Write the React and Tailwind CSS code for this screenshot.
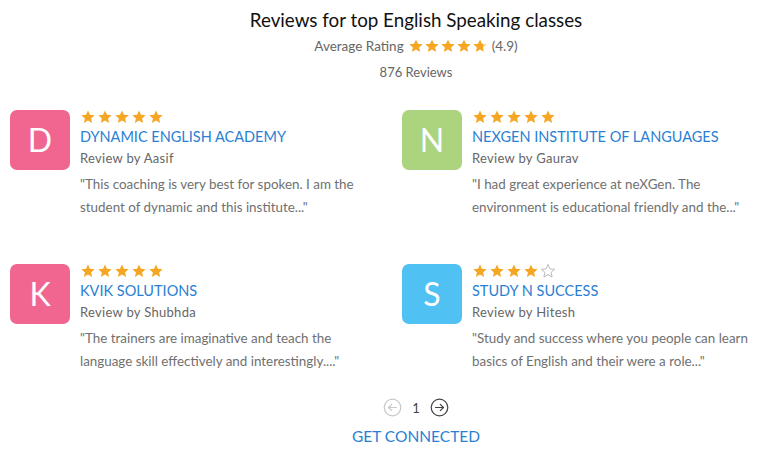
import React from 'react';

const reviews = [
  {
    letter: 'D',
    color: 'bg-[#f06690]',
    name: 'DYNAMIC ENGLISH ACADEMY',
    by: 'Aasif',
    rating: 5,
    text: '"This coaching is very best for spoken. I am the student of dynamic and this institute..."',
  },
  {
    letter: 'N',
    color: 'bg-[#acd37e]',
    name: 'NEXGEN INSTITUTE OF LANGUAGES',
    by: 'Gaurav',
    rating: 5,
    text: '"I had great experience at neXGen. The environment is educational friendly and the..."',
  },
  {
    letter: 'K',
    color: 'bg-[#f06690]',
    name: 'KVIK SOLUTIONS',
    by: 'Shubhda',
    rating: 5,
    text: '"The trainers are imaginative and teach the language skill effectively and interestingly...."',
  },
  {
    letter: 'S',
    color: 'bg-[#4fc1f3]',
    name: 'STUDY N SUCCESS',
    by: 'Hitesh',
    rating: 4,
    text: '"Study and success where you people can learn basics of English and their were a role..."',
  },
];

const STAR = 'M12 2.2l2.9 6.6 7.1.6-5.4 4.7 1.6 7-6.2-3.7-6.2 3.7 1.6-7L2 9.4l7.1-.6z';

const Star = ({ type = 'full', size = 16 }) => {
  if (type === 'empty') {
    return (
      <svg width={size} height={size} viewBox="0 0 24 24">
        <path d={STAR} fill="none" stroke="#b5b5b5" strokeWidth="1.4" strokeLinejoin="round" />
      </svg>
    );
  }
  if (type === 'part') {
    return (
      <svg width={size} height={size} viewBox="0 0 24 24">
        <defs>
          <linearGradient id="partfill">
            <stop offset="72%" stopColor="#f5a623" />
            <stop offset="72%" stopColor="#f8cf86" />
          </linearGradient>
        </defs>
        <path d={STAR} fill="url(#partfill)" />
      </svg>
    );
  }
  return (
    <svg width={size} height={size} viewBox="0 0 24 24">
      <path d={STAR} fill="#f5a623" />
    </svg>
  );
};

const CircleArrow = ({ dir, color }) => (
  <svg width="19" height="19" viewBox="0 0 24 24" fill="none" stroke={color} strokeWidth="1.5" strokeLinecap="round" strokeLinejoin="round">
    <circle cx="12" cy="12" r="10.5" />
    {dir === 'left' ? (
      <path d="M17 12H7M11 8l-4 4 4 4" />
    ) : (
      <path d="M7 12h10M13 8l4 4-4 4" />
    )}
  </svg>
);

const ReviewCard = ({ review }) => (
  <div className="flex gap-[10px]">
    <div className={`w-[60px] h-[60px] shrink-0 rounded-[7px] ${review.color} flex items-center justify-center text-white text-[32px] leading-none`}>
      {review.letter}
    </div>
    <div className="w-[295px]">
      <div className="flex h-[14px] items-center gap-[1px]">
        {[0, 1, 2, 3, 4].map(i => (
          <Star key={i} type={i < review.rating ? 'full' : 'empty'} size={16} />
        ))}
      </div>
      <div className="mt-[3px] text-[14.5px] leading-[20px] text-[#2a7fd3]">{review.name}</div>
      <div className="mt-[2px] text-[13px] leading-[18px] tracking-[0.3px] text-[#666]">Review by {review.by}</div>
      <p className="mt-[6px] text-[13.4px] leading-[23px] text-[#707070]">{review.text}</p>
    </div>
  </div>
);

export default function App() {
  return (
    <div className="w-[765px] h-[453px] bg-white overflow-hidden font-['Lato','Noto_Sans',sans-serif]">
      {/* Header */}
      <div className="flex flex-col items-center pl-[67px]">
        <h1 className="mt-[8px] text-[18.8px] leading-[24px] text-[#111]">Reviews for top English Speaking classes</h1>
        <div className="mt-[4px] flex items-center h-[20px] text-[13.5px] text-[#666]">
          <span>Average Rating</span>
          <span className="flex ml-[4px] mr-[4px]">
            <Star size={16} />
            <Star size={16} />
            <Star size={16} />
            <Star size={16} />
            <Star type="part" size={16} />
          </span>
          <span>(4.9)</span>
        </div>
        <div className="mt-[6px] text-[13px] leading-[20px] text-[#666]">876 Reviews</div>
      </div>

      {/* Reviews grid */}
      <div className="mt-[28px] pl-[10px] grid grid-cols-[392px_1fr] gap-y-[45px]">
        {reviews.map(r => (
          <ReviewCard key={r.letter} review={r} />
        ))}
      </div>

      {/* Pagination */}
      <div className="mt-[25px] flex items-center justify-center gap-[10px] pl-[67px]">
        <CircleArrow dir="left" color="#c8c8c8" />
        <span className="text-[13px] leading-[18px] text-[#444]">1</span>
        <CircleArrow dir="right" color="#444" />
      </div>
      <div className="mt-[9px] text-center pl-[67px] text-[15.5px] leading-[20px] text-[#2a7fd3]">GET CONNECTED</div>
    </div>
  );
}
